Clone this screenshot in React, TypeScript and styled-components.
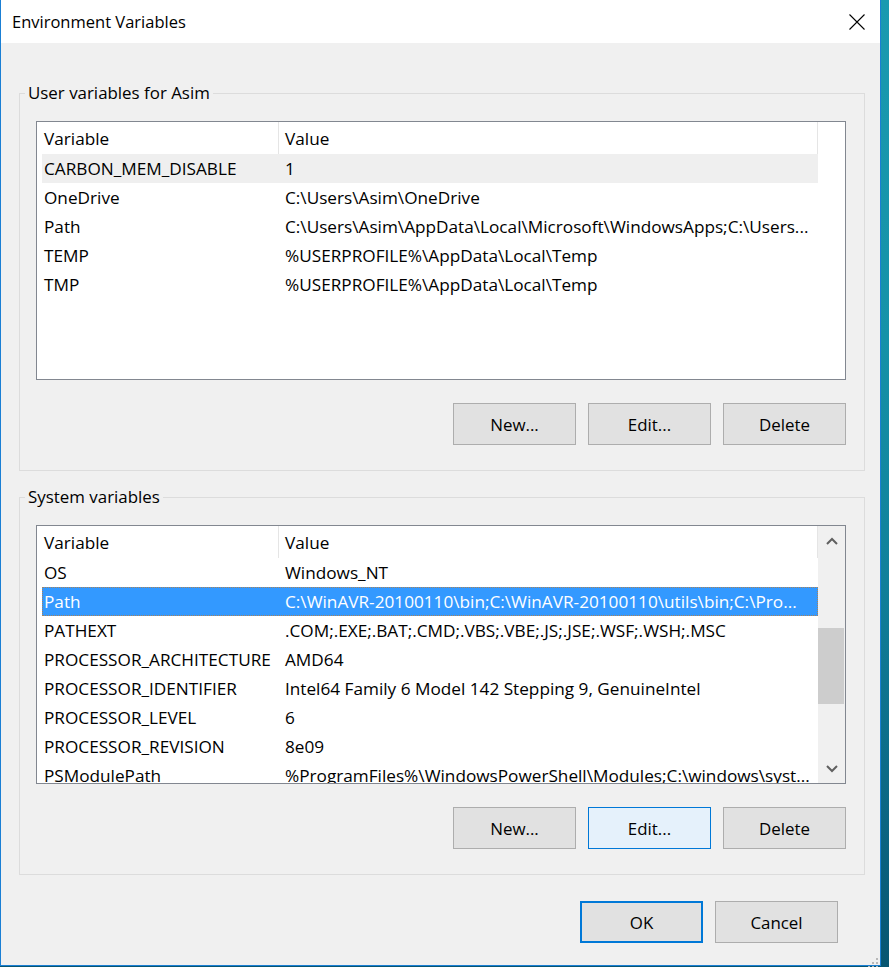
import React from "react";
import styled, { createGlobalStyle, css } from "styled-components";

const FONT = `"Segoe UI", "Open Sans", "Noto Sans", sans-serif`;
const FS = "16.5px";
const FS_LIST = "17.2px";
const FS_LEGEND = "16.9px";

const GlobalStyle = createGlobalStyle`
  html, body { margin: 0; padding: 0; }
  body {
    width: 889px;
    height: 967px;
    overflow: hidden;
    font-family: ${FONT};
    background: #0d7690;
  }
  #root { width: 889px; height: 967px; }
`;

const Desktop = styled.div`
  width: 889px;
  height: 967px;
  background: linear-gradient(180deg, #1a9ab0 0%, #1592a8 35%, #10809a 60%, #0b6582 85%, #075570 100%);
`;

const Window = styled.div`
  position: relative;
  width: 881px;
  height: 966px;
  box-sizing: border-box;
  border: 1px solid #1a7fd4;
  border-top: 0;
  background: #f0f0f0;
  display: flex;
  flex-direction: column;
`;

const TitleBar = styled.div`
  height: 43px;
  flex: none;
  background: #ffffff;
  display: flex;
  align-items: center;
  justify-content: space-between;
  padding-left: 11px;
`;

const Title = styled.span`
  font-size: ${FS};
  color: #000;
`;

const CloseButton = styled.div`
  width: 47px;
  height: 43px;
  display: flex;
  align-items: center;
  justify-content: center;
`;

const Body = styled.div`
  flex: 1;
  display: flex;
  flex-direction: column;
  padding: 39px 15px 0 18px;
`;

const GroupBox = styled.fieldset`
  margin: 0;
  padding: 0;
  min-width: 0;
  width: 846px;
  box-sizing: border-box;
  border: 1px solid #dcdcdc;
  & + & {
    margin-top: 15px;
  }
`;

const Legend = styled.legend`
  margin-left: 5px;
  padding: 0 3px;
  font-size: ${FS_LEGEND};
  line-height: 22px;
  color: #000;
`;

const GroupContent = styled.div`
  display: flex;
  flex-direction: column;
  padding: 17px 18px 25px 16px;
`;

const ListView = styled.div`
  box-sizing: border-box;
  width: 810px;
  height: 259px;
  border: 1px solid #828790;
  background: #ffffff;
  display: flex;
  overflow: hidden;
`;

const ListMain = styled.div`
  width: 781px;
  flex: none;
  display: flex;
  flex-direction: column;
  overflow: hidden;
`;

const HeaderRow = styled.div`
  display: flex;
  height: 32px;
  flex: none;
`;

const HeaderCell = styled.div<{ $w: number; $pad: number }>`
  width: ${(p) => p.$w}px;
  box-sizing: border-box;
  padding-left: ${(p) => p.$pad}px;
  padding-top: 1px;
  border-right: 1px solid #e5e5e5;
  line-height: 31px;
  font-size: ${FS_LIST};
  color: #000;
  white-space: nowrap;
`;

type RowState = "none" | "inactive" | "selected";

const Row = styled.div<{ $state: RowState }>`
  display: flex;
  flex: none;
  height: 29px;
  width: 776px;
  margin-left: 5px;
  box-sizing: border-box;
  line-height: 29px;
  font-size: ${FS_LIST};
  color: #000;
  ${(p) =>
    p.$state === "inactive" &&
    css`
      background: #efefef;
    `}
  ${(p) =>
    p.$state === "selected" &&
    css`
      background: #3399ff;
      color: #ffffff;
      outline: 1px dotted #a8825a;
      outline-offset: -1px;
    `}
`;

const Cell = styled.div<{ $w: number; $pad: number }>`
  width: ${(p) => p.$w}px;
  flex: none;
  box-sizing: border-box;
  padding-left: ${(p) => p.$pad}px;
  white-space: nowrap;
  overflow: hidden;
  text-overflow: ellipsis;
`;

const Scrollbar = styled.div`
  width: 27px;
  flex: none;
  background: #f0f0f0;
  display: flex;
  flex-direction: column;
`;

const ArrowButton = styled.div`
  height: 29px;
  flex: none;
  display: flex;
  align-items: center;
  justify-content: center;
`;

const Track = styled.div`
  flex: 1;
  display: flex;
  flex-direction: column;
`;

const Thumb = styled.div<{ $top: number; $h: number }>`
  margin: ${(p) => p.$top}px 1px 0 0;
  height: ${(p) => p.$h}px;
  background: #cdcdcd;
`;

const ButtonRow = styled.div<{ $mt: number; $pr: number }>`
  display: flex;
  justify-content: flex-end;
  gap: 12px;
  margin-top: ${(p) => p.$mt}px;
  padding-right: ${(p) => p.$pr}px;
`;

type BtnVariant = "normal" | "hot" | "default";

const Button = styled.button<{ $variant?: BtnVariant }>`
  width: 123px;
  height: 42px;
  box-sizing: border-box;
  margin: 0;
  padding: 0;
  font-family: ${FONT};
  font-size: ${FS_LEGEND};
  color: #000;
  background: #e1e1e1;
  border: 1px solid #adadad;
  border-radius: 0;
  ${(p) =>
    p.$variant === "hot" &&
    css`
      background: #e5f1fb;
      border-color: #0078d7;
    `}
  ${(p) =>
    p.$variant === "default" &&
    css`
      border: 2px solid #0078d7;
    `}
`;

const Grip = styled.div`
  position: absolute;
  right: 1px;
  bottom: 1px;
  width: 12px;
  height: 12px;
`;

type Item = { name: string; value: string; state?: RowState };

const userVars: Item[] = [
  { name: "CARBON_MEM_DISABLE", value: "1", state: "inactive" },
  { name: "OneDrive", value: "C:\\Users\\Asim\\OneDrive" },
  {
    name: "Path",
    value: "C:\\Users\\Asim\\AppData\\Local\\Microsoft\\WindowsApps;C:\\Users...",
  },
  { name: "TEMP", value: "%USERPROFILE%\\AppData\\Local\\Temp" },
  { name: "TMP", value: "%USERPROFILE%\\AppData\\Local\\Temp" },
];

const systemVars: Item[] = [
  { name: "OS", value: "Windows_NT" },
  {
    name: "Path",
    value: "C:\\WinAVR-20100110\\bin;C:\\WinAVR-20100110\\utils\\bin;C:\\Pro...",
    state: "selected",
  },
  { name: "PATHEXT", value: ".COM;.EXE;.BAT;.CMD;.VBS;.VBE;.JS;.JSE;.WSF;.WSH;.MSC" },
  { name: "PROCESSOR_ARCHITECTURE", value: "AMD64" },
  {
    name: "PROCESSOR_IDENTIFIER",
    value: "Intel64 Family 6 Model 142 Stepping 9, GenuineIntel",
  },
  { name: "PROCESSOR_LEVEL", value: "6" },
  { name: "PROCESSOR_REVISION", value: "8e09" },
  {
    name: "PSModulePath",
    value: "%ProgramFiles%\\WindowsPowerShell\\Modules;C:\\windows\\syst...",
  },
];

const Chevron = ({ up }: { up: boolean }) => (
  <svg width="12" height="8" viewBox="0 0 12 8">
    <polyline
      points={up ? "1,7 6,2 11,7" : "1,1 6,6 11,1"}
      fill="none"
      stroke="#606060"
      strokeWidth="2"
    />
  </svg>
);

const VarList = ({ items, scroll }: { items: Item[]; scroll?: boolean }) => (
  <ListView>
    <ListMain>
      <HeaderRow>
        <HeaderCell $w={242} $pad={7}>Variable</HeaderCell>
        <HeaderCell $w={539} $pad={6}>Value</HeaderCell>
      </HeaderRow>
      {items.map((it) => (
        <Row key={it.name + it.value} $state={it.state ?? "none"}>
          <Cell $w={236} $pad={2}>{it.name}</Cell>
          <Cell $w={540} $pad={7}>{it.value}</Cell>
        </Row>
      ))}
    </ListMain>
    {scroll && (
      <Scrollbar>
        <ArrowButton>
          <Chevron up />
        </ArrowButton>
        <Track>
          <Thumb $top={73} $h={76} />
        </Track>
        <ArrowButton>
          <Chevron up={false} />
        </ArrowButton>
      </Scrollbar>
    )}
  </ListView>
);

export default function App() {
  return (
    <>
      <GlobalStyle />
      <Desktop>
        <Window>
          <TitleBar>
            <Title>Environment Variables</Title>
            <CloseButton>
              <svg width="16" height="16" viewBox="0 0 16 16">
                <path d="M0.5 0.5 L15.5 15.5 M15.5 0.5 L0.5 15.5" stroke="#000" strokeWidth="1.1" />
              </svg>
            </CloseButton>
          </TitleBar>
          <Body>
            <GroupBox>
              <Legend>User variables for Asim</Legend>
              <GroupContent>
                <VarList items={userVars} />
                <ButtonRow $mt={23} $pr={0}>
                  <Button>New...</Button>
                  <Button>Edit...</Button>
                  <Button>Delete</Button>
                </ButtonRow>
              </GroupContent>
            </GroupBox>
            <GroupBox>
              <Legend>System variables</Legend>
              <GroupContent>
                <VarList items={systemVars} scroll />
                <ButtonRow $mt={23} $pr={0}>
                  <Button>New...</Button>
                  <Button $variant="hot">Edit...</Button>
                  <Button>Delete</Button>
                </ButtonRow>
              </GroupContent>
            </GroupBox>
            <ButtonRow $mt={26} $pr={27}>
              <Button $variant="default">OK</Button>
              <Button>Cancel</Button>
            </ButtonRow>
          </Body>
          <Grip>
            <svg width="12" height="12" viewBox="0 0 12 12">
              <rect x="9" y="1" width="2" height="2" fill="#b8b8b8" />
              <rect x="9" y="5" width="2" height="2" fill="#b8b8b8" />
              <rect x="5" y="5" width="2" height="2" fill="#b8b8b8" />
              <rect x="9" y="9" width="2" height="2" fill="#b8b8b8" />
              <rect x="5" y="9" width="2" height="2" fill="#b8b8b8" />
              <rect x="1" y="9" width="2" height="2" fill="#b8b8b8" />
            </svg>
          </Grip>
        </Window>
      </Desktop>
    </>
  );
}
